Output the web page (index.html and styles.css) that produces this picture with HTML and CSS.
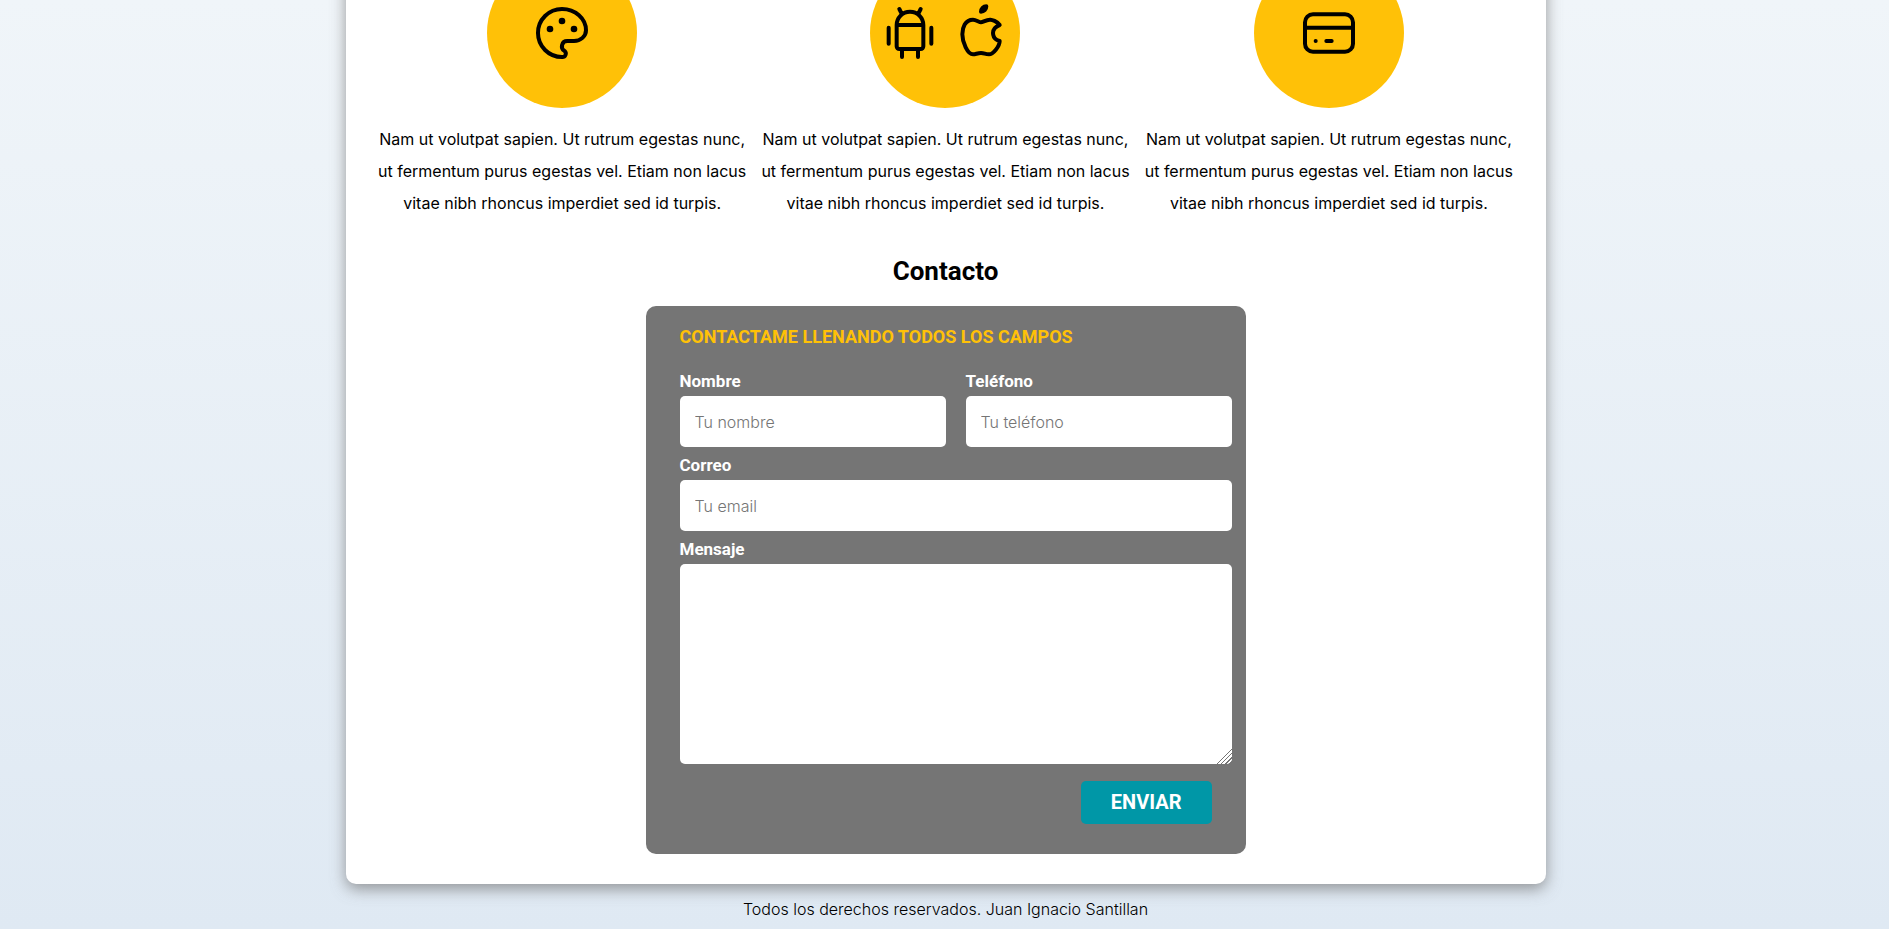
FILE: index.html
```html
<!DOCTYPE html>
<html lang="es">
<head>
  <meta charset="utf-8">
  <meta name="viewport" content="width=device-width, initial-scale=1">
  <title>Juan Ignacio Santillan</title>
  <link rel="stylesheet" href="styles.css">
</head>
<body>
  <main class="contenedor">
    <section class="servicios">
      <article class="servicio">
        <div class="iconos">
          <svg class="icono" viewBox="0 0 24 24" aria-hidden="true">
            <path d="M12 21a9 9 0 1 1 0 -18a9 8 0 0 1 9 8a4.5 4 0 0 1 -4.5 4h-2.5a2 2 0 0 0 -1 3.75a1.3 1.3 0 0 1 -1 2.25"/>
            <circle class="punto" cx="7.5" cy="10.5" r=".5"/>
            <circle class="punto" cx="12" cy="7.5" r=".5"/>
            <circle class="punto" cx="16.5" cy="10.5" r=".5"/>
          </svg>
        </div>
        <p>Nam ut volutpat sapien. Ut rutrum egestas nunc, ut fermentum purus egestas vel. Etiam non lacus vitae nibh rhoncus imperdiet sed id turpis.</p>
      </article>
      <article class="servicio">
        <div class="iconos">
          <svg class="icono" viewBox="0 0 24 24" aria-hidden="true">
            <path d="M4 10v6M20 10v6M7 9h10v8a1 1 0 0 1 -1 1h-8a1 1 0 0 1 -1 -1v-8a5 5 0 0 1 10 0M8 3l1 2M16 3l-1 2M9 18v3M15 18v3"/>
          </svg>
          <svg class="icono" viewBox="0 0 24 24" aria-hidden="true">
            <path d="M9 7c-3 0 -4 3 -4 5.5c0 3 2 7.5 4 7.5c1.088 -.046 1.679 -.5 3 -.5c1.312 0 1.5 .5 3 .5s4 -3 4 -5c-.028 -.01 -2.472 -.403 -2.5 -3c-.019 -2.17 2.416 -2.954 2.5 -3c-1.023 -1.492 -2.951 -1.963 -3.5 -2c-1.433 -.111 -2.83 1 -3.5 1c-.68 0 -1.9 -1 -3 -1z"/>
            <path d="M12 4a2 2 0 0 0 2 -2a2 2 0 0 0 -2 2"/>
          </svg>
        </div>
        <p>Nam ut volutpat sapien. Ut rutrum egestas nunc, ut fermentum purus egestas vel. Etiam non lacus vitae nibh rhoncus imperdiet sed id turpis.</p>
      </article>
      <article class="servicio">
        <div class="iconos">
          <svg class="icono" viewBox="0 0 24 24" aria-hidden="true">
            <rect x="3" y="5" width="18" height="14" rx="3"/>
            <path d="M3 10h18M7 15h.01M11 15h2"/>
          </svg>
        </div>
        <p>Nam ut volutpat sapien. Ut rutrum egestas nunc, ut fermentum purus egestas vel. Etiam non lacus vitae nibh rhoncus imperdiet sed id turpis.</p>
      </article>
    </section>

    <section>
      <h2>Contacto</h2>
      <form class="formulario">
        <fieldset>
          <legend>CONTACTAME LLENANDO TODOS LOS CAMPOS</legend>
          <div class="campos">
            <div class="campo">
              <label for="nombre">Nombre</label>
              <input id="nombre" type="text" placeholder="Tu nombre">
            </div>
            <div class="campo">
              <label for="telefono">Teléfono</label>
              <input id="telefono" type="tel" placeholder="Tu teléfono">
            </div>
            <div class="campo ancho">
              <label for="correo">Correo</label>
              <input id="correo" type="email" placeholder="Tu email">
            </div>
            <div class="campo ancho">
              <label for="mensaje">Mensaje</label>
              <textarea id="mensaje"></textarea>
            </div>
          </div>
          <div class="acciones">
            <button class="boton" type="submit">ENVIAR</button>
          </div>
        </fieldset>
      </form>
    </section>
  </main>
  <footer class="pie">
    <p>Todos los derechos reservados. Juan Ignacio Santillan</p>
  </footer>
</body>
</html>
```
FILE: styles.css
```css
*,
*::before,
*::after {
  box-sizing: border-box;
}

html {
  background: #dfe9f3;
}

body {
  margin: 0;
  padding-left: 2px;
  min-height: 100vh;
  overflow: hidden;
  background: linear-gradient(to top, #dfe9f3 0%, #f0f5f9 100%);
  color: #000;
  font-family: Inter, "Noto Sans", sans-serif;
  font-size: 16px;
  line-height: 32px;
}

.contenedor {
  max-width: 1200px;
  margin: -60px auto 0;
  padding: 18px 30px 30px;
  background: #fff;
  border-radius: 10px;
  box-shadow: 0 5px 15px rgba(112, 112, 112, .7);
}

.servicios {
  display: grid;
  grid-template-columns: repeat(3, 1fr);
  gap: 10px;
}

.servicio {
  display: flex;
  flex-direction: column;
  align-items: center;
  text-align: center;
}

.servicio p {
  margin: 15px 0 16px;
}

.iconos {
  display: flex;
  align-items: center;
  justify-content: space-evenly;
  width: 150px;
  height: 150px;
  border-radius: 50%;
  background: #ffc107;
}

.icono {
  width: 64px;
  height: 64px;
  fill: none;
  stroke: #000;
  stroke-width: 1.5;
  stroke-linecap: round;
  stroke-linejoin: round;
}

.punto {
  fill: #000;
}

h2,
legend,
label,
.boton {
  font-family: Roboto, "Noto Sans", sans-serif;
  font-weight: 700;
}

h2 {
  margin: 17px 0 16px;
  font-size: 26px;
  line-height: 38px;
  text-align: center;
}

.formulario {
  width: 100%;
  max-width: 600px;
  margin: 0 auto;
  padding: 15px 14px 30px 34px;
  background: #757575;
  border-radius: 10px;
}

fieldset {
  margin: 0;
  padding: 0;
  border: 0;
}

legend {
  padding: 0;
  margin-bottom: 15px;
  color: #ffc107;
  font-size: 18px;
  line-height: 32px;
}

.campos {
  display: grid;
  grid-template-columns: 1fr 1fr;
  gap: 5px 20px;
}

.campo {
  display: flex;
  flex-direction: column;
}

.ancho {
  grid-column: 1 / -1;
}

label {
  padding-bottom: 2px;
  color: #fff;
  font-size: 17px;
  line-height: 26px;
}

input,
textarea {
  width: 100%;
  padding: 15px;
  border: 0;
  border-radius: 5px;
  background: #fff;
  font: inherit;
  line-height: 21px;
}

input {
  height: 51px;
}

input::placeholder {
  color: #757575;
  font-weight: 300;
}

textarea {
  height: 200px;
}

textarea::-webkit-resizer {
  background: linear-gradient(
    135deg,
    transparent 10px,
    #757575 10px 11px,
    transparent 11px 13px,
    #757575 13px 14px,
    transparent 14px 16px,
    #757575 16px 17px,
    transparent 17px 19px,
    #757575 19px 20px,
    transparent 20px
  );
}

.acciones {
  display: flex;
  justify-content: flex-end;
  padding: 17px 20px 0 0;
}

.boton {
  padding: 0 30px;
  border: 0;
  border-radius: 5px;
  background: #0097a7;
  color: #fff;
  font-size: 20px;
  line-height: 43px;
}

.pie p {
  margin: 9px 0 0;
  font-weight: 300;
  text-align: center;
}
```
